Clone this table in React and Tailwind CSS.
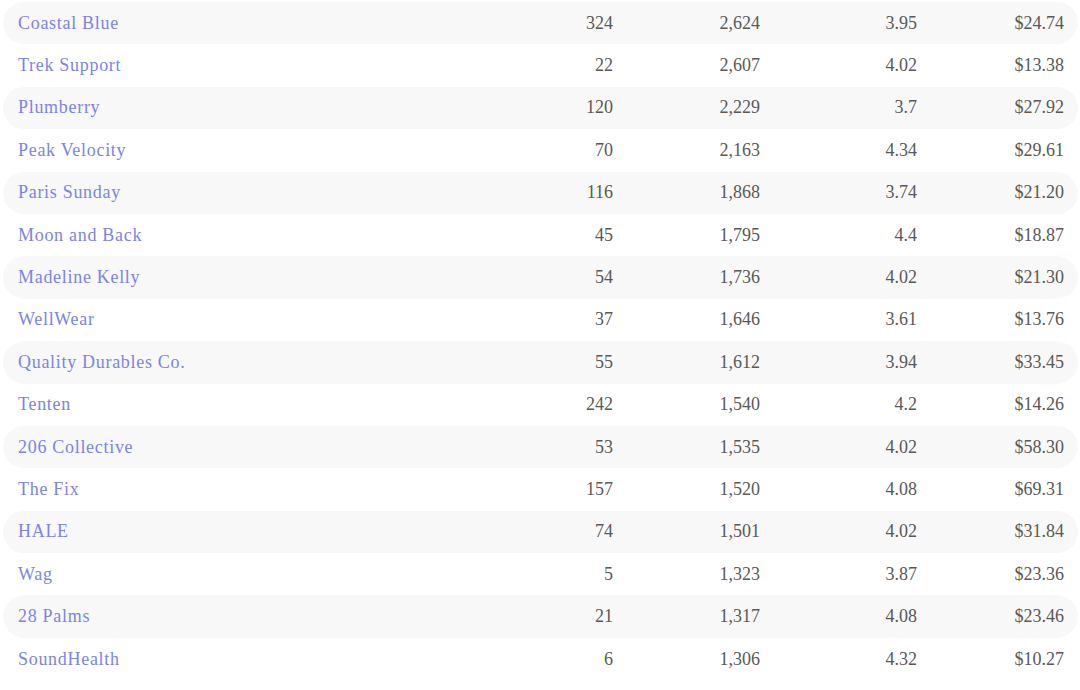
const rows = [
  ['Coastal Blue', '324', '2,624', '3.95', '$24.74'],
  ['Trek Support', '22', '2,607', '4.02', '$13.38'],
  ['Plumberry', '120', '2,229', '3.7', '$27.92'],
  ['Peak Velocity', '70', '2,163', '4.34', '$29.61'],
  ['Paris Sunday', '116', '1,868', '3.74', '$21.20'],
  ['Moon and Back', '45', '1,795', '4.4', '$18.87'],
  ['Madeline Kelly', '54', '1,736', '4.02', '$21.30'],
  ['WellWear', '37', '1,646', '3.61', '$13.76'],
  ['Quality Durables Co.', '55', '1,612', '3.94', '$33.45'],
  ['Tenten', '242', '1,540', '4.2', '$14.26'],
  ['206 Collective', '53', '1,535', '4.02', '$58.30'],
  ['The Fix', '157', '1,520', '4.08', '$69.31'],
  ['HALE', '74', '1,501', '4.02', '$31.84'],
  ['Wag', '5', '1,323', '3.87', '$23.36'],
  ['28 Palms', '21', '1,317', '4.08', '$23.46'],
  ['SoundHealth', '6', '1,306', '4.32', '$10.27'],
]

// Striped table of brands with their counts, sales, rating and price.
export default function App() {
  return (
    <div
      className="w-[1080px] h-[690px] bg-white pt-[2px] pl-[3px] pr-[2px] overflow-hidden text-[18px] text-[#595959]"
      style={{ fontFamily: '"Liberation Serif", serif' }}
    >
      {rows.map(([name, count, sold, rating, price], i) => (
        <div
          key={name}
          className={`flex items-center h-[42.4px] pl-[15px] pr-[14px] rounded-full ${
            i % 2 === 0 ? 'bg-[#f8f8f8]' : ''
          }`}
        >
          <span className="flex-1 text-[#7c84e6] tracking-[0.7px]">{name}</span>
          <span className="w-[100px] text-right">{count}</span>
          <span className="w-[147px] text-right">{sold}</span>
          <span className="w-[157px] text-right">{rating}</span>
          <span className="w-[147px] text-right">{price}</span>
        </div>
      ))}
    </div>
  )
}
